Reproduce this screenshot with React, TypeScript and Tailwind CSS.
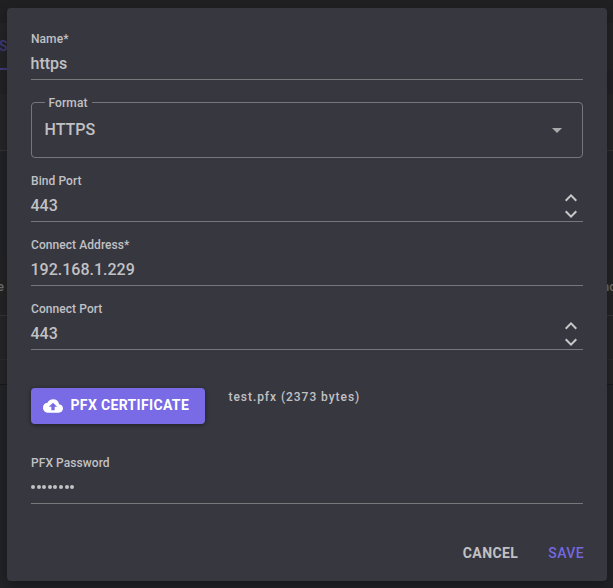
import React from 'react';

function Chevron({ up = false }: { up?: boolean }) {
  return (
    <svg width="12" height="8" viewBox="0 0 12 8" fill="none" stroke="#c8c8ca" strokeWidth="2">
      <path d={up ? 'M0.7 6.7 6 1.4l5.3 5.3' : 'M0.7 1.3 6 6.6l5.3-5.3'} />
    </svg>
  );
}

type FieldProps = { label: string; value: string; stepper?: boolean; password?: boolean };

function Field({ label, value, stepper, password }: FieldProps) {
  return (
    <div className="flex h-12 flex-col border-b border-[#77777b]">
      <div className="h-4 text-[12px] leading-[14px] tracking-[0.07px]">{label}</div>
      <div className="flex h-[31px] justify-between">
        {password ? (
          <div className="flex items-center gap-[1.6px] pb-[2px]">
            {Array.from(value).map((_, i) => (
              <span key={i} className="size-1 rounded-full bg-[#c2c2c4]" />
            ))}
          </div>
        ) : (
          <span className="-ml-[0.5px] text-base leading-[31px] tracking-[0px]">{value}</span>
        )}
        {stepper && (
          <div className="flex flex-col gap-2 pt-1 pr-[6px]">
            <Chevron up />
            <Chevron />
          </div>
        )}
      </div>
    </div>
  );
}

function PageBehind() {
  return (
    <div className="flex h-[588px] flex-col overflow-hidden bg-[#222327] text-[13px]">
      <div className="h-[23px] bg-[#202023]" />
      <div className="h-[47px] bg-[#242427]">
        <div className="flex h-full w-8 items-center border-b-2 border-[#413b7b] text-sm text-[#413b7b]">
          <span className="-ml-px">S</span>
        </div>
      </div>
      <div className="h-[24px] bg-[#222226]" />
      <div className="h-[57px] border-b border-[#333335] bg-[#252527]" />
      <div className="h-[107px]" />
      <div className="flex h-[58px] items-center justify-between border-b border-[#353537] bg-[#242426] text-[#707072]">
        <span className="-ml-[3px]">e</span>
        <span className="-mr-[3px]">nc</span>
      </div>
      <div className="h-[44px] border-b border-[#2b2b2e] bg-[#252527]" />
      <div className="h-[25px] border-b border-[#19191c] bg-[#252527]" />
    </div>
  );
}

export default function App() {
  return (
    <div className="relative h-[588px] w-[613px] overflow-hidden font-['Roboto',sans-serif] font-medium text-[#c1c1c4]">
      <PageBehind />
      <div className="absolute top-2 left-[7px] flex h-[573px] w-[600px] flex-col rounded bg-[#373740] px-6 pt-6 shadow-[0_6px_14px_rgba(0,0,0,0.3)]">
        <Field label="Name*" value="https" />
        <fieldset className="mt-[14px] h-[64px] rounded border border-[#77777b] pr-5 pl-[12.5px]">
          <legend className="h-4 px-1 text-[12px] leading-[18px] tracking-[0.11px]">Format</legend>
          <div className="flex h-[39px] w-full items-center justify-between">
            <span className="text-base leading-[39px] tracking-[0px]">HTTPS</span>
            <svg className="mt-[2px]" width="10" height="5" viewBox="0 0 10 5" fill="#aaaaad">
              <path d="M0 0h10L5 5z" />
            </svg>
          </div>
        </fieldset>
        <div className="mt-4 flex flex-col gap-4">
          <Field label="Bind Port" value="443" stepper />
          <Field label="Connect Address*" value="192.168.1.229" />
          <Field label="Connect Port" value="443" stepper />
        </div>
        <div className="mt-[38px] flex">
          <button className="flex h-9 w-[174px] items-center gap-[7.5px] rounded bg-[#786be5] pl-3 text-sm font-bold tracking-[0.34px] text-white shadow-[0_1px_4px_rgba(0,0,0,0.45)]">
            <svg width="20" height="20" viewBox="0 0 24 24" fill="currentColor">
              <path d="M19.35 10.04A7.49 7.49 0 0 0 12 4C9.11 4 6.6 5.64 5.35 8.04A5.994 5.994 0 0 0 0 14c0 3.31 2.69 6 6 6h13c2.76 0 5-2.24 5-5 0-2.64-2.05-4.78-4.65-4.96zM14 13v4h-4v-4H7l5-5 5 5h-3z" />
            </svg>
            <span className="pb-[2px]">PFX CERTIFICATE</span>
          </button>
          <span className="ml-[23.5px] text-[12px] leading-[18px] tracking-[0.95px]">test.pfx (2373 bytes)</span>
        </div>
        <div className="mt-8">
          <Field label="PFX Password" value="password" password />
        </div>
        <div className="mt-10 flex justify-end gap-[30px] text-sm leading-[18px] tracking-[0.4px]">
          <button className="font-bold">CANCEL</button>
          <button className="-mr-[1px] text-[#7568df]">SAVE</button>
        </div>
      </div>
    </div>
  );
}
